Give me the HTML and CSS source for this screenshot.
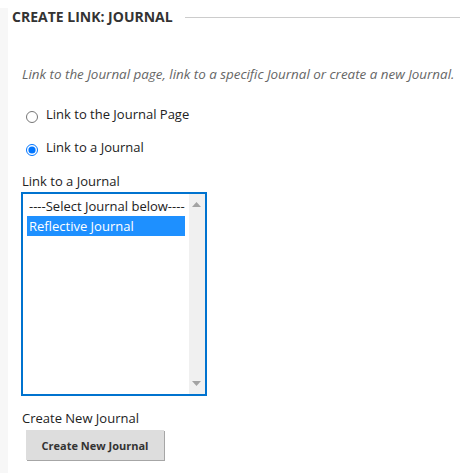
FILE: index.html
```html
<!DOCTYPE html>
<html>
<head>
<meta charset="utf-8">
<link rel="stylesheet" href="styles.css">
</head>
<body>
<div class="page">
  <div class="strip"></div>
  <div class="content">
    <div class="header">
      <h2 class="title">CREATE LINK: JOURNAL</h2>
      <div class="rule"></div>
    </div>
    <p class="instructions">Link to the Journal page, link to a specific Journal or create a new Journal.</p>
    <div class="radios">
      <label class="radio-row"><input type="radio" name="lt" class="radio"><span>Link to the Journal Page</span></label>
      <label class="radio-row"><input type="radio" name="lt" class="radio" checked><span>Link to a Journal</span></label>
    </div>
    <div class="field-label">Link to a Journal</div>
    <div class="listbox">
      <div class="options">
        <div class="option">----Select Journal below----</div>
        <div class="option selected">Reflective Journal</div>
      </div>
      <div class="scrollbar">
        <svg class="arrow" width="9" height="5" viewBox="0 0 9 5"><path d="M0 5 L4.5 0 L9 5 Z" fill="#a3a3a3"/></svg>
        <svg class="arrow" width="9" height="5" viewBox="0 0 9 5"><path d="M0 0 L4.5 5 L9 0 Z" fill="#a3a3a3"/></svg>
      </div>
    </div>
    <div class="field-label create-label">Create New Journal</div>
    <button class="btn">Create New Journal</button>
  </div>
</div>
</body>
</html>
```

FILE: styles.css
```css
html, body {
  margin: 0;
  padding: 0;
  background: #ffffff;
}
body {
  font-family: "Open Sans", "Liberation Sans", sans-serif;
  color: #222;
  width: 460px;
  height: 473px;
  overflow: hidden;
}
.page {
  display: flex;
  height: 473px;
}
.strip {
  width: 8px;
  flex: none;
  background: #f7f7f7;
  margin-top: 8px;
}
.content {
  flex: 1;
  padding-left: 4px;
}
.header {
  display: flex;
  align-items: center;
  height: 34px;
}
.title {
  margin: 0;
  font-size: 14px;
  font-weight: 700;
  color: #333;
  white-space: nowrap;
  line-height: 34px;
}
.rule {
  flex: 1;
  height: 1px;
  background: #cccccc;
  margin-left: 12px;
}
.instructions {
  margin: 31px 0 0 10px;
  font-style: italic;
  font-size: 13.4px;
  color: #666;
  line-height: 18px;
  white-space: nowrap;
}
.radios {
  margin: 25px 0 0 14px;
  display: flex;
  flex-direction: column;
  gap: 15px;
}
.radio-row {
  display: flex;
  align-items: center;
  height: 18px;
  font-size: 13px;
  color: #222;
}
.radio-row span {
  margin-top: -6px;
}
.radio {
  margin: 0 8px 0 0;
  width: 12px;
  height: 12px;
}
.field-label {
  margin: 13px 0 0 10px;
  font-size: 13px;
  line-height: 18px;
  color: #222;
}
.listbox {
  margin: 2px 0 0 9px;
  width: 182px;
  height: 200px;
  border: 2px solid #0073cf;
  display: flex;
}
.options {
  flex: 1;
  padding: 2px 4px 0 4px;
}
.option {
  font-size: 13px;
  line-height: 20px;
  color: #222;
  padding-left: 2px;
  white-space: nowrap;
}
.option.selected {
  background: #1e90ff;
  color: #fff;
}
.scrollbar {
  width: 17px;
  background: #f0f0f0;
  display: flex;
  flex-direction: column;
  justify-content: space-between;
  align-items: center;
  padding: 8px 0 8px;
}
.arrow {
  display: block;
}
.create-label {
  margin-top: 13px;
}
.btn {
  margin: 3px 0 0 14px;
  width: 138px;
  height: 30px;
  background: #dddddd;
  border: none;
  box-shadow: 1px 1px 0 #a6a6a6;
  font-family: "Open Sans", "Liberation Sans", sans-serif;
  font-weight: 700;
  font-size: 11px;
  color: #333;
  padding: 0;
}
```
